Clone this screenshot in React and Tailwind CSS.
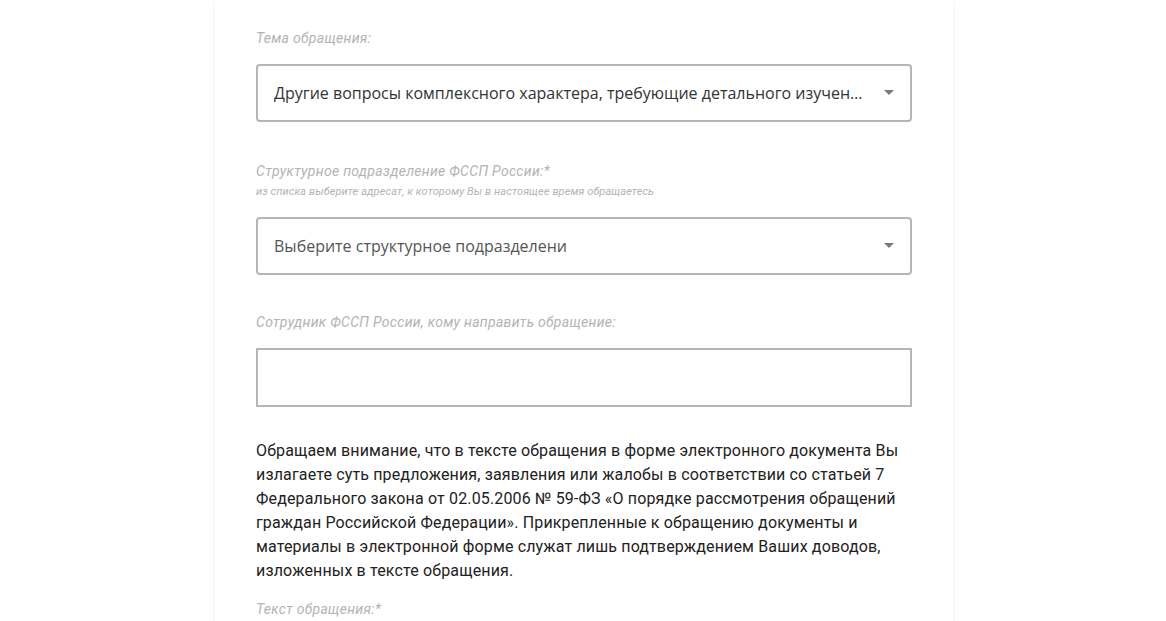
function Caret() {
  return (
    <svg width="10" height="6" viewBox="0 0 10 6" className="shrink-0">
      <path d="M0 0 L10 0 L5 5 Z" fill="#7a7a7a" />
    </svg>
  );
}

function SelectBox({ text, muted, clip }) {
  return (
    <div className="h-[58px] border-2 border-[#b5b5b5] rounded-[4px] flex items-center pl-4 pr-[16px] bg-white">
      <div
        className={`flex-1 min-w-0 text-[16px] font-['Open_Sans',sans-serif] ${
          muted ? "text-[#555]" : "text-[#333]"
        }`}
      >
        <div className={clip ? "w-[292px] overflow-hidden whitespace-nowrap" : "truncate pr-5"}>
          {text}
        </div>
      </div>
      <Caret />
    </div>
  );
}

function Label({ children }) {
  return (
    <div className="text-[14px] leading-5 italic tracking-[0.3px] text-[#b3b3b3] font-['Roboto',sans-serif]">
      {children}
    </div>
  );
}

const notice = [
  "Обращаем внимание, что в тексте обращения в форме электронного документа Вы",
  "излагаете суть предложения, заявления или жалобы в соответствии со статьей 7",
  "Федерального закона от 02.05.2006 № 59-ФЗ «О порядке рассмотрения обращений",
  "граждан Российской Федерации». Прикрепленные к обращению документы и",
  "материалы в электронной форме служат лишь подтверждением Ваших доводов,",
  "изложенных в тексте обращения.",
];

export default function App() {
  return (
    <div className="min-h-screen w-full bg-white flex justify-center overflow-hidden">
      <div className="w-[738px] ml-[2px] bg-white shadow-[0_0_4px_rgba(0,0,0,0.08)] px-[41px] pt-[28px] pb-10">
        <Label>Тема обращения:</Label>
        <div className="mt-4">
          <SelectBox text="Другие вопросы комплексного характера, требующие детального изучения и рассмотрения" />
        </div>

        <div className="mt-[39px]">
          <Label>Структурное подразделение ФССП России:*</Label>
          <div className="text-[11px] leading-[14px] italic tracking-[0.1px] text-[#b3b3b3] font-['Roboto',sans-serif] mt-1">
            из списка выберите адресат, к которому Вы в настоящее время обращаетесь
          </div>
        </div>
        <div className="mt-[18px]">
          <SelectBox text="Выберите структурное подразделение" muted clip />
        </div>

        <div className="mt-[37px]">
          <Label>Сотрудник ФССП России, кому направить обращение:</Label>
        </div>
        <div className="mt-4 h-[59px] border-2 border-[#b5b5b5] bg-white" />

        <p className="mt-8 text-[16px] leading-6 tracking-[0.15px] text-[#222] font-['Roboto',sans-serif] whitespace-nowrap">
          {notice.map((line) => (
            <span key={line} className="block">
              {line}
            </span>
          ))}
        </p>

        <div className="mt-4">
          <Label>Текст обращения:*</Label>
        </div>
      </div>
    </div>
  );
}
